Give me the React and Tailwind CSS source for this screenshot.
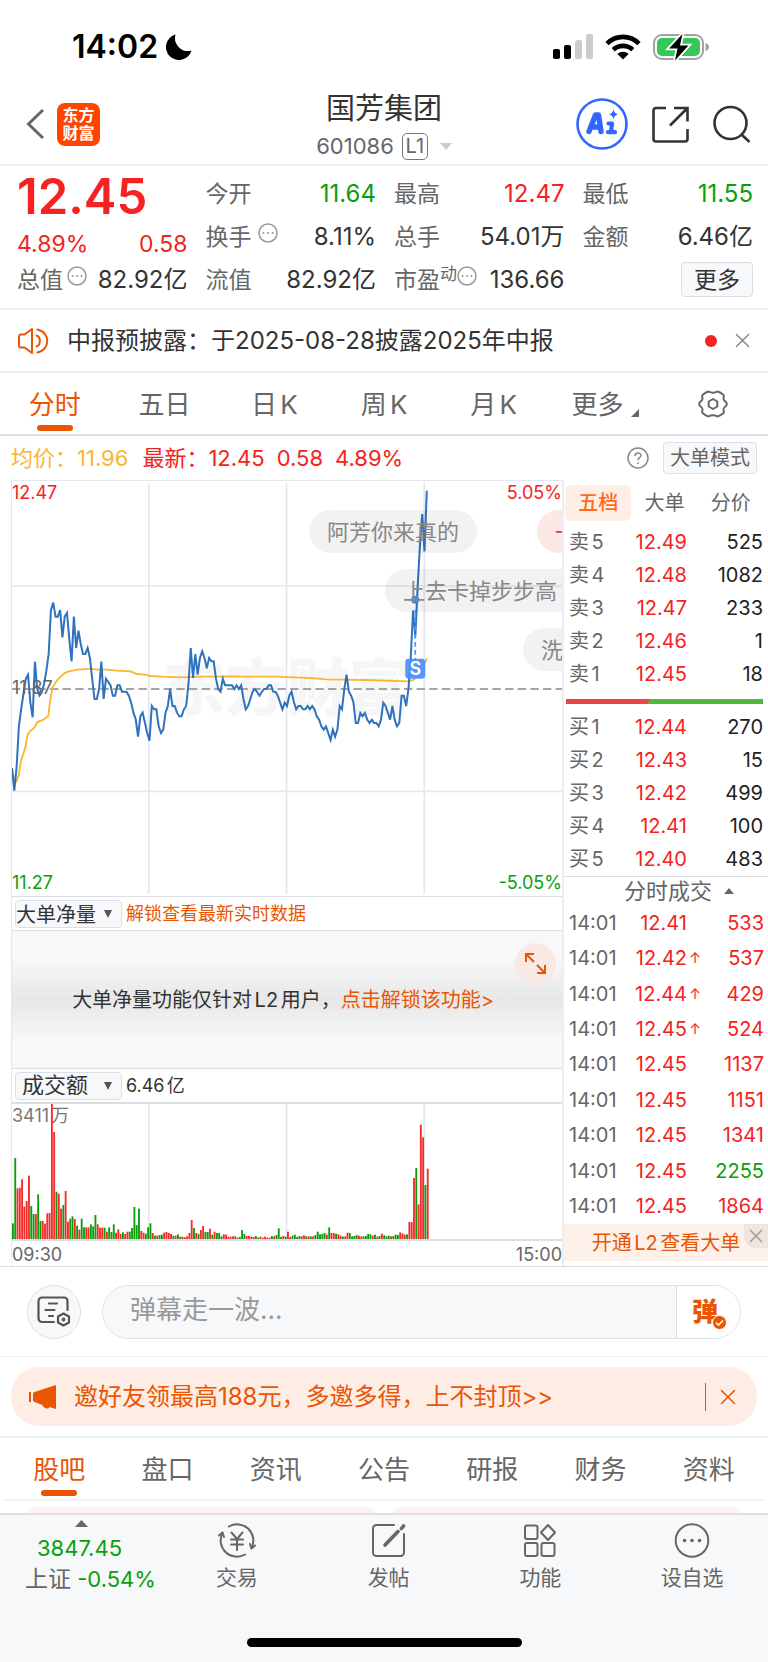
import { useState } from "react";

const KLINE_TABS = ["分时", "五日", "日K", "周K", "月K"];
const INFO_TABS = ["股吧", "盘口", "资讯", "公告", "研报", "财务", "资料"];

const SELLS = [
  ["卖5", "12.49", 525],
  ["卖4", "12.48", 1082],
  ["卖3", "12.47", 233],
  ["卖2", "12.46", 1],
  ["卖1", "12.45", 18],
];

const BUYS = [
  ["买1", "12.44", 270],
  ["买2", "12.43", 15],
  ["买3", "12.42", 499],
  ["买4", "12.41", 100],
  ["买5", "12.40", 483],
];

const TRADES = [
  { price: "12.41", vol: 533 },
  { price: "12.42", vol: 537, up: true },
  { price: "12.44", vol: 429, up: true },
  { price: "12.45", vol: 524, up: true },
  { price: "12.45", vol: 1137 },
  { price: "12.45", vol: 1151 },
  { price: "12.45", vol: 1341 },
  { price: "12.45", vol: 2255, sell: true },
  { price: "12.45", vol: 1864 },
];

// one value per minute, in chart units (31 = top edge, 1276 = bottom edge)
const PRICE = [
  892, 960, 890, 768, 715, 670, 625, 612, 695, 740,
  573, 655, 675, 665, 640, 600, 550, 418, 396, 438,
  438, 418, 500, 438, 427, 505, 572, 438, 532, 480,
  520, 550, 550, 532, 562, 625, 685, 685, 655, 573,
  685, 624, 634, 644, 675, 675, 644, 644, 663, 663,
  664, 675, 696, 726, 746, 798, 737, 726, 756, 787,
  810, 706, 716, 716, 767, 787, 777, 726, 706, 655,
  706, 706, 726, 737, 737, 716, 706, 640, 532, 622,
  550, 612, 562, 542, 562, 593, 562, 572, 572, 624,
  655, 663, 624, 644, 644, 644, 644, 655, 644, 655,
  644, 685, 716, 706, 685, 663, 655, 664, 675, 664,
  655, 655, 644, 644, 663, 664, 675, 696, 716, 696,
  706, 675, 663, 694, 716, 706, 706, 716, 716, 706,
  716, 706, 716, 737, 747, 767, 777, 767, 787, 808,
  777, 798, 777, 706, 716, 655, 612, 663, 675, 695,
  757, 757, 727, 737, 727, 747, 757, 747, 757, 757,
  767, 747, 696, 706, 726, 747, 706, 747, 767, 757,
  675, 675, 706, 655, 560, 420, 497, 350, 225, 130,
  242, 60,
];

const AVERAGE =
  "0,892 6,925 13,932 20,915 27,870 34,850 40,830 47,792 54,782 68,770 75,755 95,747 109,736 116,680 122,650 136,628 157,608 170,602 197,597 239,594 252,597 286,597 316,600 356,602 376,610 401,612 416,616 451,618 516,620 566,618 666,617 696,618 796,618 866,621 896,622 946,626 1066,628 1191,632 1206,628 1228,606 1247,563";

// turnover per minute: r = up, g = down
const VOLUME = (
  "g47 g243 r152 r154 r179 r97 r114 r190 g99 g75 r75 g134 g54 r54 r46 r77 r78 r405 r321 g142 " +
  "r136 r91 g102 r144 r52 g61 g68 r60 g40 r28 g61 g35 r35 r35 g44 g38 g72 r44 r34 r34 " +
  "g34 r22 g35 g21 g44 r19 r29 r15 g20 r15 r22 g22 g33 g96 g42 g91 r24 r19 g16 g35 " +
  "g47 r18 g10 r10 g12 g13 r19 r21 r18 r15 g10 r10 g14 g7 r7 r5 r8 r18 r57 g33 " +
  "r18 g15 r27 r39 g21 g21 r31 g13 r22 g18 g18 g8 r14 r13 r7 r7 r8 g8 r4 g6 " +
  "g27 g15 r9 r9 r7 r6 g9 g4 r7 r4 r7 r4 r4 g9 r8 g12 g32 g6 r9 g7 " +
  "r22 r6 g10 g13 r6 g9 r8 r11 g8 r8 g8 r8 g12 g22 g14 g15 g18 r13 g35 r18 " +
  "r18 g16 r14 r10 g7 r8 r19 g18 g8 g9 g12 r10 r8 g8 g9 g15 g14 r10 g13 r7 " +
  "g9 r16 g11 g8 g10 r8 g9 g13 g12 r20 r17 r13 g14 r51 r51 r183 g213 r104 r343 r305 " +
  "g162 r211"
).split(" ");

const MINUTE = 1653 / 240;

function Dots() {
  return (
    <svg className="w-5 h-5 mb-2 shrink-0" viewBox="0 0 20 20" fill="none" stroke="#999">
      <circle cx="10" cy="10" r="9" strokeWidth="1.5" />
      <path d="M5.5 10h.1M10 10h.1M14.5 10h.1" strokeWidth="2" strokeLinecap="round" />
    </svg>
  );
}

function Close({ className }) {
  return (
    <svg className={className} viewBox="0 0 16 16" fill="none" stroke="currentColor" strokeWidth="1.6" strokeLinecap="round">
      <path d="M1.5 1.5l13 13M14.5 1.5l-13 13" />
    </svg>
  );
}

function StatusBar() {
  return (
    <div className="h-[84px] pt-2.5 pl-[72px] pr-[58px] flex items-center justify-between">
      <div className="flex items-center gap-2">
        <span className="text-[32px] leading-10 font-semibold text-black">14:02</span>
        <svg className="w-[26px] h-[26px]" viewBox="0 0 26 26">
          <path d="M9.500.5A13 13 0 1 0 25.500 16.500A13 13 0 0 1 9.500.5z" fill="#000" />
        </svg>
      </div>
      <div className="flex items-center gap-3">
        <svg className="w-10 h-[26px]" viewBox="0 0 40 26">
          <rect x="0" y="15" width="7" height="10" rx="2" />
          <rect x="11" y="11" width="7" height="14" rx="2" />
          <rect x="22" y="6" width="7" height="19" rx="2" fill="#ccc" />
          <rect x="33" y="0" width="7" height="25" rx="2" fill="#ccc" />
        </svg>
        <svg className="w-9 h-[26px]" viewBox="0 0 36 26" fill="none" stroke="#000" strokeWidth="4.6">
          <path d="M2 9.600C11 .6 25 .6 34 9.600" />
          <path d="M8.200 15.800c5.600-5.200 14-5.200 19.600 0" />
          <path d="M18 25.500l-5.600-5.600c3.200-3 8-3 11.200 0z" fill="#000" stroke="none" />
        </svg>
        <svg className="w-[57px] h-[28px]" viewBox="0 0 57 28">
          <rect x="1" y="2" width="49" height="24" rx="8" fill="none" stroke="#a3a3a3" strokeWidth="2" />
          <rect x="4" y="5" width="43" height="18" rx="5" fill="#34c759" />
          <path d="M52.500 10v8c2-.5 3.500-2 3.500-4s-1.500-3.500-3.500-4z" fill="#a3a3a3" />
          <path d="M29.500 1L16 15.500h8.500L22 27.500 35.500 12.500H27z" fill="#000" stroke="#fff" strokeWidth="3.600" paintOrder="stroke" />
        </svg>
      </div>
    </div>
  );
}

function Header() {
  return (
    <header className="h-[82px] border-b-2 border-[#eeeeee] px-[17px] grid grid-cols-[1fr_auto_1fr] items-center">
      <div className="pl-[9px] flex items-center gap-3">
        <button aria-label="返回">
          <svg className="w-[19px] h-8" viewBox="0 0 19 32" fill="none" stroke="#666" strokeWidth="3">
            <path d="M17 2L2.500 16 17 30" />
          </svg>
        </button>
        <a href="#home" className="w-[43px] h-[43px] rounded-lg bg-[#ff4400] text-white text-base leading-[18px] font-bold flex flex-col items-center justify-center">
          <span>东方</span>
          <span>财富</span>
        </a>
      </div>
      <div className="pt-1 flex flex-col items-center gap-[7px]">
        <h1 className="text-[29px] leading-[34px] text-[#333]">国芳集团</h1>
        <button className="flex items-center text-[22px] leading-[27px] text-[#666]">
          <span>601086</span>
          <span className="ml-2 w-[26px] h-[27px] rounded-[5px] border border-[#777] text-xl leading-[25px]">L1</span>
          <svg className="ml-3 w-3 h-[7px]" viewBox="0 0 12 7">
            <path d="M0 0h12L6 7z" fill="#ccc" />
          </svg>
        </button>
      </div>
      <div className="flex items-center justify-end gap-6">
        <button aria-label="AI">
          <svg className="w-[52px] h-[52px]" viewBox="0 0 52 52">
            <circle cx="26" cy="26" r="24.500" fill="#fff" stroke="#3366ff" strokeWidth="2.600" />
            <path d="M13 33.500L19.500 17h3L25 33.500M16 29h8" fill="none" stroke="#3366ff" strokeWidth="5.400" strokeLinecap="round" strokeLinejoin="round" />
            <path d="M32.500 25.500h3.500l-1 8.500M32 34.200h7" fill="none" stroke="#3366ff" strokeWidth="4.200" strokeLinecap="round" strokeLinejoin="round" />
            <path d="M37.500 11.500q.9 4 4.500 4.800-3.600.9-4.500 4.900-.9-4-4.500-4.900 3.600-.8 4.500-4.800z" fill="#3366ff" />
          </svg>
        </button>
        <button aria-label="分享">
          <svg className="w-[37px] h-[37px]" viewBox="0 0 37 37" fill="none" stroke="#333" strokeWidth="2.600">
            <path d="M14 2H4a2.500 2.500 0 0 0-2.500 2.500V33A2.500 2.500 0 0 0 4 35.500h29a2.500 2.500 0 0 0 2.500-2.500V23" />
            <path d="M22 2h13.500v13.500M35 2.500L18 19.500" />
          </svg>
        </button>
        <button aria-label="搜索">
          <svg className="w-[38px] h-[38px]" viewBox="0 0 38 38" fill="none" stroke="#333" strokeWidth="2.600">
            <circle cx="17.500" cy="18" r="16" />
            <path d="M28.500 29.500l8 7.500" />
          </svg>
        </button>
      </div>
    </header>
  );
}

function Stat({ label, value, color = "text-[#333]", children }) {
  return (
    <div className="flex items-center">
      <span className="text-[23px] text-[#666]">{label}</span>
      {children}
      <span className={`ml-auto ${color}`}>{value}</span>
    </div>
  );
}

function Quote() {
  return (
    <section className="pt-1.5 pb-[7px] pl-[17px] pr-[15px] border-b-2 border-[#eeeeee] grid grid-cols-4 auto-rows-[43px] gap-x-[18px] text-2xl leading-7">
      <div className="row-span-2 flex flex-col justify-between text-[#f52222]">
        <div className="text-[49px] leading-[49px] font-semibold">12.45</div>
        <div className="flex justify-between text-[23px]">
          <span>4.89%</span>
          <span>0.58</span>
        </div>
      </div>
      <Stat label="今开" value="11.64" color="text-[#0a9f0a]" />
      <Stat label="最高" value="12.47" color="text-[#f52222]" />
      <Stat label="最低" value="11.55" color="text-[#0a9f0a]" />
      <Stat label="换手" value="8.11%">
        <span className="ml-1.5"><Dots /></span>
      </Stat>
      <Stat label="总手" value="54.01万" />
      <Stat label="金额" value="6.46亿" />
      <Stat label="总值" value="82.92亿">
        <span className="ml-1"><Dots /></span>
      </Stat>
      <Stat label="流值" value="82.92亿" />
      <Stat label="市盈" value="136.66">
        <span className="mb-3 text-[17px] text-[#666]">动</span>
        <Dots />
      </Stat>
      <div className="flex items-center justify-end">
        <button className="w-[72px] h-[35px] rounded border border-[#d9dee6] bg-[#f6f8fa] text-[23px] text-[#333]">更多</button>
      </div>
    </section>
  );
}

function Notice({ onClose }) {
  return (
    <div className="h-[63px] border-b-2 border-[#eeeeee] pl-[18px] pr-[18px] flex items-center">
      <svg className="w-[31px] h-[26px] shrink-0" viewBox="0 0 31 26" fill="none" stroke="#ea5504" strokeWidth="2" strokeLinejoin="round" strokeLinecap="round">
        <path d="M1 8.500a2 2 0 0 1 2-2h3.500L14 1v24L6.500 19.500H3a2 2 0 0 1-2-2z" />
        <path d="M18.500 7.500c4.500 1.500 4.500 9.500 0 11M19.500 1.500c13 2.500 13 20.500 0 23" />
      </svg>
      <a href="#notice" className="ml-[18px] text-2xl leading-7 text-[#333]">中报预披露：于2025-08-28披露2025年中报</a>
      <span className="ml-auto w-3 h-3 rounded-full bg-[#f52222]"></span>
      <button aria-label="关闭" className="ml-[18px] text-[#888]" onClick={onClose}>
        <Close className="w-[15px] h-[15px]" />
      </button>
    </div>
  );
}

function Tab({ active, onClick, children }) {
  return (
    <button onClick={onClick} className={`pt-3.5 flex flex-col items-center [text-autospace:normal] text-[26px] leading-9 ${active ? "text-[#ea5504]" : "text-[#666]"}`}>
      <span className="flex">{children}</span>
      {active && <span className="mt-0.5 w-9 h-1.5 rounded-[3px] bg-[#ea5504]"></span>}
    </button>
  );
}

function KlineTabs() {
  const [tab, setTab] = useState("分时");
  return (
    <nav className="h-[63px] border-b-2 border-[#dcdfe6] grid grid-cols-7">
      {KLINE_TABS.map((name) => (
        <Tab key={name} active={tab === name} onClick={() => setTab(name)}>{name}</Tab>
      ))}
      <Tab>
        <span className="pl-1">更多</span>
        <svg className="ml-2 mb-1.5 w-2 h-2 self-end" viewBox="0 0 8 8">
          <path d="M8 0v8H0z" fill="#666" />
        </svg>
      </Tab>
      <button aria-label="设置" className="flex items-center justify-center">
        <svg className="w-[30px] h-[28px]" viewBox="0 0 30 28" fill="none" stroke="#666" strokeWidth="2" strokeLinejoin="round">
          <path d="M10.500 1.500Q15 4 19.500 1.500Q22 2 25 4.500Q26.500 5.500 25.500 8Q25 10 28 12Q29.500 14 28 16Q25 18 25.500 20Q26.500 22.500 25 23.500Q22 26 19.500 26.500Q15 24 10.500 26.500Q8 26 5 23.500Q3.500 22.500 4.500 20Q5 18 2 16Q.5 14 2 12Q5 10 4.500 8Q3.500 5.500 5 4.500Q8 2 10.500 1.500Z" />
          <path d="M15 9l4.300 2.500v5L15 19l-4.300-2.500v-5z" />
        </svg>
      </button>
    </nav>
  );
}

function Bullet({ className, children }) {
  return (
    <div className={`absolute h-[43px] px-[18px] rounded-full flex items-center text-[22px] leading-6 whitespace-nowrap ${className}`}>
      {children}
    </div>
  );
}

function PriceChart() {
  const points = PRICE.map((y, i) => `${i * MINUTE},${y}`).join(" ");
  return (
    <div className="relative h-[416px] overflow-hidden border-b border-[#dcdfe6] text-lg leading-5">
      <div className="absolute inset-0 flex items-center justify-center text-[62px] leading-none font-black text-[#f6f6f6]">东方财富</div>
      <svg className="absolute inset-0 w-full h-full" viewBox="0 31 1653 1245" preserveAspectRatio="none" fill="none">
        <path d="M0 346H1653M0 962H1653M411 36V1270M825 36V1270M1239 36V1270" stroke="#e4e7ee" strokeWidth="5" />
        <path d="M0 655H1653" stroke="#888" strokeWidth="5" strokeDasharray="25 13" />
        <polyline points={AVERAGE} stroke="#fbb532" strokeWidth="5.500" />
        <polyline points={points} stroke="#2f72bf" strokeWidth="6" />
        <path d="M1212 418V600" stroke="#4a90f5" strokeWidth="5" strokeDasharray="14 10" />
        <circle cx="1212" cy="387" r="12" fill="#4a90f5" />
        <rect x="1182" y="564" width="60" height="60" rx="10" fill="#4a90ff" fillOpacity=".92" />
        <text x="1212" y="614" textAnchor="middle" fontSize="54" fontWeight="600" fill="#fff">S</text>
      </svg>
      <span className="absolute left-0 top-0.5 text-[#f52222]">12.47</span>
      <span className="absolute right-0 top-0.5 text-[#f52222]">5.05%</span>
      <span className="absolute left-0 top-[197px] text-[#666]">11.87</span>
      <span className="absolute left-0 bottom-[3px] text-[#0a9f0a]">11.27</span>
      <span className="absolute right-0 bottom-[3px] text-[#0a9f0a]">-5.05%</span>

      <Bullet className="left-[297px] top-[29px] bg-black/5 text-[#888]">阿芳你来真的</Bullet>
      <Bullet className="left-[525px] top-[29px] w-40 bg-[#fde8e8] text-[#e83c3c]">一</Bullet>
      <Bullet className="left-[373px] top-[88px] w-[196px] bg-black/5 text-[#888]">上去卡掉步步高</Bullet>
      <Bullet className="left-[511px] top-[147px] w-40 bg-black/5 text-[#888]">洗</Bullet>
    </div>
  );
}

function VolumeChart() {
  return (
    <div className="relative h-[139px] border-y-2 border-[#dcdfe6]">
      <span className="absolute left-0 top-0.5 text-lg leading-5 text-[#777] [text-autospace:normal]">3411万</span>
      <svg className="absolute inset-0 w-full h-full" viewBox="0 0 1653 405" preserveAspectRatio="none">
        <path d="M411 0V405M825 0V405M1239 0V405" stroke="#e4e7ee" strokeWidth="5" />
        {VOLUME.map((v, i) => {
          const h = Number(v.slice(1));
          return <rect key={i} x={i * MINUTE} y={405 - h} width="5.600" height={h} fill={v[0] === "r" ? "#f52a2a" : "#0a9f0a"} />;
        })}
      </svg>
    </div>
  );
}

function IndicatorSelect({ label, options, className }) {
  return (
    <div className="relative w-[107px] h-7 ml-[3px]">
      <select aria-label={label} className={`appearance-none block w-full h-full rounded border border-[#dcdfe6] bg-[#f6f8fa] text-[#333] ${className}`}>
        {options.map((o) => (
          <option key={o}>{o}</option>
        ))}
      </select>
      <svg className="absolute right-2.5 top-2.5 w-2 h-2 pointer-events-none" viewBox="0 0 8 8">
        <path d="M0 0h8L4 8z" fill="#555" />
      </svg>
    </div>
  );
}

function BookTable({ rows }) {
  return (
    <table className="w-full h-[166px] table-fixed text-xl leading-6">
      <tbody>
        {rows.map(([label, price, qty]) => (
          <tr key={label}>
            <td className="w-[50px] p-0 pl-[5px] text-[#666] [text-autospace:normal]">{label}</td>
            <td className="w-[73px] p-0 text-right text-[#f52222]">{price}</td>
            <td className="p-0 pr-[5px] text-right text-[#222]">{qty}</td>
          </tr>
        ))}
      </tbody>
    </table>
  );
}

function SidePanel() {
  const [tab, setTab] = useState("五档");
  return (
    <aside className="w-[206px] shrink-0 border-l-2 border-[#eceef2] flex flex-col">
      <div className="h-[45px] pt-[5px] pl-px pr-1 grid grid-cols-3">
        {["五档", "大单", "分价"].map((name) => (
          <button
            key={name}
            onClick={() => setTab(name)}
            className={`h-9 rounded-md text-xl leading-6 ${tab === name ? "bg-[#ffeee6] text-[#ff6a1a] font-medium" : "text-[#666]"}`}
          >
            {name}
          </button>
        ))}
      </div>
      <BookTable rows={SELLS} />
      <div className="mt-2 mb-1.5 ml-0.5 mr-[5px] h-[5px] flex bg-[#55b83c]">
        <div className="bg-[#ea4444] [clip-path:polygon(0_0,100%_0,95%_100%,0_100%)]" style={{ width: "43%" }}></div>
      </div>
      <BookTable rows={BUYS} />
      <button className="h-[29px] pl-[26px] border-t border-[#dcdfe6] flex items-center justify-center gap-3 text-[22px] leading-7 text-[#666]">
        分时成交
        <svg className="w-2.5 h-1.5" viewBox="0 0 10 6">
          <path d="M0 6h10L5 0z" fill="#666" />
        </svg>
      </button>
      <table className="w-full h-[319px] table-fixed text-xl leading-6 text-[#f52222]">
        <tbody>
          {TRADES.map((t, i) => (
            <tr key={i}>
              <td className="w-[60px] p-0 pl-[5px] text-[#666]">14:01</td>
              <td className="w-[63px] p-0 text-right">{t.price}</td>
              <td className="w-4 p-0 text-sm leading-6 text-center">{t.up && "↑"}</td>
              <td className={`p-0 pr-1 text-right ${t.sell ? "text-[#0a9f0a]" : ""}`}>{t.vol}</td>
            </tr>
          ))}
        </tbody>
      </table>
      <div className="relative h-[37px] bg-[#fdf1ea] flex items-center justify-center">
        <a href="#l2" className="text-xl leading-6 text-[#ea5504] [text-autospace:normal]">开通L2查看大单</a>
        <button aria-label="关闭" className="absolute right-0 top-0 w-6 h-6 rounded-bl-xl bg-[#efe4de] text-[#999] flex items-center justify-center">
          <Close className="w-3.5 h-3.5" />
        </button>
      </div>
    </aside>
  );
}

function ChartArea() {
  return (
    <section className="border-b border-[#dcdfe6]">
      <div className="h-11 pl-[11px] pr-[11px] flex items-center text-[22px] leading-7 text-[#f52222]">
        <span className="text-[#fbb532]">均价：11.96</span>
        <span className="ml-3.5">最新：12.45</span>
        <span className="ml-3">0.58</span>
        <span className="ml-3">4.89%</span>
        <button aria-label="说明" className="ml-auto">
          <svg className="w-[22px] h-[22px]" viewBox="0 0 22 22" fill="none" stroke="#888" strokeWidth="1.500">
            <circle cx="11" cy="11" r="10" />
            <path d="M8 9c0-4 6-4 6-.5 0 2-3 2.300-3 4.700M11 15.200v1.800" />
          </svg>
        </button>
        <button className="ml-[14px] w-[94px] h-8 rounded border border-[#dcdfe6] bg-[#f6f8fa] text-xl leading-6 text-[#666]">大单模式</button>
      </div>
      <div className="flex">
        <div className="ml-[11px] flex-1 min-w-0 border-l border-t border-[#e4e7ee]">
          <PriceChart />
          <div className="h-[33px] flex items-center">
            <IndicatorSelect label="指标一" options={["大单净量", "成交额"]} className="text-xl" />
            <a href="#unlock" className="ml-1 text-lg leading-6 text-[#ea5504]">解锁查看最新实时数据</a>
          </div>
          <div className="relative h-[139px] border-y border-[#dcdfe6] bg-linear-to-b from-[#f8f8f8] from-20% via-[#e7e7e7] via-50% to-[#f8f8f8] to-80% flex items-center justify-center text-xl leading-7 text-[#333]">
            <span className="pr-2 [text-autospace:normal]">
              大单净量功能仅针对L2用户，<a href="#unlock" className="text-[#ea5504]">点击解锁该功能&gt;</a>
            </span>
            <button aria-label="全屏" className="absolute right-1.5 top-3 w-[41px] h-[41px] rounded-full bg-[#f8e9e2] flex items-center justify-center">
              <svg className="w-[21px] h-[21px]" viewBox="0 0 21 21" fill="none" stroke="#ea5504" strokeWidth="2">
                <path d="M1 9V1h8M1 1l8 8M20 12v8h-8M20 20l-8-8" />
              </svg>
            </button>
          </div>
          <div className="h-[33px] flex items-center text-[#333]">
            <IndicatorSelect label="指标二" options={["成交额", "大单净量"]} className="pl-1.5 pb-1 text-[22px] leading-6" />
            <span className="ml-1 text-lg leading-6 [text-autospace:normal]">6.46亿</span>
          </div>
          <VolumeChart />
          <div className="h-[25px] pt-0.5 flex items-center justify-between text-lg leading-6 text-[#666]">
            <span>09:30</span>
            <span>15:00</span>
          </div>
        </div>
        <SidePanel />
      </div>
    </section>
  );
}

function CommentBar() {
  return (
    <div className="h-[90px] pl-[27px] pr-[27px] border-b border-[#f0f0f0] flex items-center gap-[21px]">
      <button aria-label="弹幕设置" className="w-[54px] h-[54px] shrink-0 rounded-full border border-[#dcdfe6] bg-[#f6f8fa] flex items-center justify-center">
        <svg className="w-[34px] h-[31px]" viewBox="0 0 34 31" fill="none" stroke="#555" strokeWidth="2.200" strokeLinecap="round" strokeLinejoin="round">
          <path d="M17 26H5a3.500 3.500 0 0 1-3.500-3.500V5A3.500 3.500 0 0 1 5 1.500h22A3.500 3.500 0 0 1 30.500 5v9" />
          <path d="M12 7.500h8M8.500 14h9M12 20h4" />
          <path d="M26.500 17.500l5.500 3v6l-5.500 3-5.500-3v-6z" />
          <circle cx="26.500" cy="23.500" r=".8" />
        </svg>
      </button>
      <div className="h-[54px] flex-1 rounded-full border border-[#dcdfe6] overflow-hidden flex">
        <input aria-label="弹幕" placeholder="弹幕走一波..." className="flex-1 min-w-0 pl-[27px] pb-1 bg-[#f6f8fa] text-[26px] leading-9 outline-none placeholder:text-[#999]" />
        <button aria-label="发送弹幕" className="relative w-16 pl-[15px] border-l border-[#dcdfe6] bg-white text-left text-[26px] font-black text-[#ea5504]">
          弹
          <svg className="absolute left-[35px] top-[29px] w-[15px] h-[15px]" viewBox="0 0 15 15">
            <circle cx="7.500" cy="7.500" r="7" fill="#ea5504" stroke="#fff" />
            <path d="M4 7.500l2.500 2.500L11 5.500" fill="none" stroke="#fff" strokeWidth="1.600" />
          </svg>
        </button>
      </div>
    </div>
  );
}

function InviteBanner({ onClose }) {
  return (
    <div className="py-2.5 px-[11px] border-b-2 border-[#eeeeee]">
      <div className="h-[59px] rounded-[28px] bg-[#fdede5] pl-[18px] pr-[21px] flex items-center text-[#ea5504]">
        <svg className="w-[27px] h-6 shrink-0" viewBox="0 0 27 24" fill="currentColor">
          <rect x="0" y="7" width="2" height="10" />
          <path d="M4 9q0-1.500 1.500-2L27 0v24l-5-1.500-1.500-.6c-1 2.500-6 2-7-1.900L5.500 17Q4 16.500 4 15z" />
        </svg>
        <a href="#invite" className="ml-[18px] text-2xl leading-8">邀好友领最高188元，多邀多得，上不封顶&gt;&gt;</a>
        <span className="ml-auto w-px h-7 bg-[#ea5504]"></span>
        <button aria-label="关闭" className="ml-3.5" onClick={onClose}>
          <Close className="w-4 h-4" />
        </button>
      </div>
    </div>
  );
}

function InfoTabs() {
  const [tab, setTab] = useState("股吧");
  return (
    <>
      <nav className="mx-[5px] h-[63px] border-b-2 border-[#f0f0f0] grid grid-cols-7">
        {INFO_TABS.map((name) => (
          <Tab key={name} active={tab === name} onClick={() => setTab(name)}>{name}</Tab>
        ))}
      </nav>
      <div className="h-3 pt-1.5 px-6 grid grid-cols-2 gap-3 overflow-hidden">
        <div className="h-6 rounded-xl bg-[#fff3ef]"></div>
        <div className="h-6 rounded-xl bg-[#fff3ef]"></div>
      </div>
    </>
  );
}

function NavItem({ label, children }) {
  return (
    <button className="flex-1 pt-2 flex flex-col items-center gap-1.5 text-[21px] leading-7 text-[#666]">
      <svg className="w-[38px] h-[35px]" viewBox="0 0 38 35" fill="none" stroke="#666" strokeWidth="2" strokeLinecap="round" strokeLinejoin="round">
        {children}
      </svg>
      {label}
    </button>
  );
}

function BottomNav() {
  return (
    <footer className="h-[149px] border-t-2 border-[#dcdfe6] bg-[#f6f8fa] flex flex-col justify-between">
      <div className="flex">
        <button className="w-[161px] pl-[25px] pt-[5px] flex flex-col items-start whitespace-nowrap text-[22px] leading-[31px] text-[#0a9f0a]">
          <svg className="ml-[50px] w-[13px] h-[7px]" viewBox="0 0 13 7">
            <path d="M0 7h13L6.500 0z" fill="#666" />
          </svg>
          <span className="mt-1.5 ml-3">3847.45</span>
          <span><span className="text-[23px] text-[#666]">上证</span> -0.54%</span>
        </button>
        <NavItem label="交易">
          <path d="M11 3.500A16.200 16.200 0 0 1 33.500 25M27 31.500A16.200 16.200 0 0 1 4.500 10" />
          <path d="M1 12.500l3.500-3 1.500 4.500M37 22.500l-3.500 3-1.500-4.500" />
          <path d="M13.500 9.500L19 16l5.500-6.500M13 16.500h12M13 21.500h12M19 16v11" />
        </NavItem>
        <NavItem label="发帖">
          <path d="M24 2H6.500A3.500 3.500 0 0 0 3 5.500v24A3.500 3.500 0 0 0 6.500 33h24a3.500 3.500 0 0 0 3.500-3.500V11" />
          <path d="M15 22L28 8.500" strokeWidth="3.600" />
          <path d="M31.500 5.500L33.500 3" strokeWidth="3.600" />
        </NavItem>
        <NavItem label="功能">
          <rect x="4" y="2.500" width="12.500" height="13.500" rx="2" />
          <rect x="4" y="20" width="12.500" height="13" rx="2" />
          <rect x="20.500" y="20" width="13" height="13" rx="2" />
          <path d="M27 2l7 7.500-7 7.500-7-7.500z" />
        </NavItem>
        <NavItem label="设自选">
          <circle cx="19" cy="17.500" r="16.300" />
          <path d="M11.500 17.500h.1M19 17.500h.1M26.500 17.500h.1" strokeWidth="3.600" />
        </NavItem>
      </div>
      <div className="mb-[15px] mx-auto w-[275px] h-[9px] rounded-full bg-black"></div>
    </footer>
  );
}

export default function App() {
  const [showNotice, setShowNotice] = useState(true);
  const [showInvite, setShowInvite] = useState(true);

  return (
    <div className="w-full bg-white font-['Inter','Noto_Sans_CJK_SC',sans-serif]">
      <StatusBar />
      <Header />
      <Quote />
      {showNotice && <Notice onClose={() => setShowNotice(false)} />}
      <KlineTabs />
      <ChartArea />
      <CommentBar />
      {showInvite && <InviteBanner onClose={() => setShowInvite(false)} />}
      <InfoTabs />
      <BottomNav />
    </div>
  );
}
